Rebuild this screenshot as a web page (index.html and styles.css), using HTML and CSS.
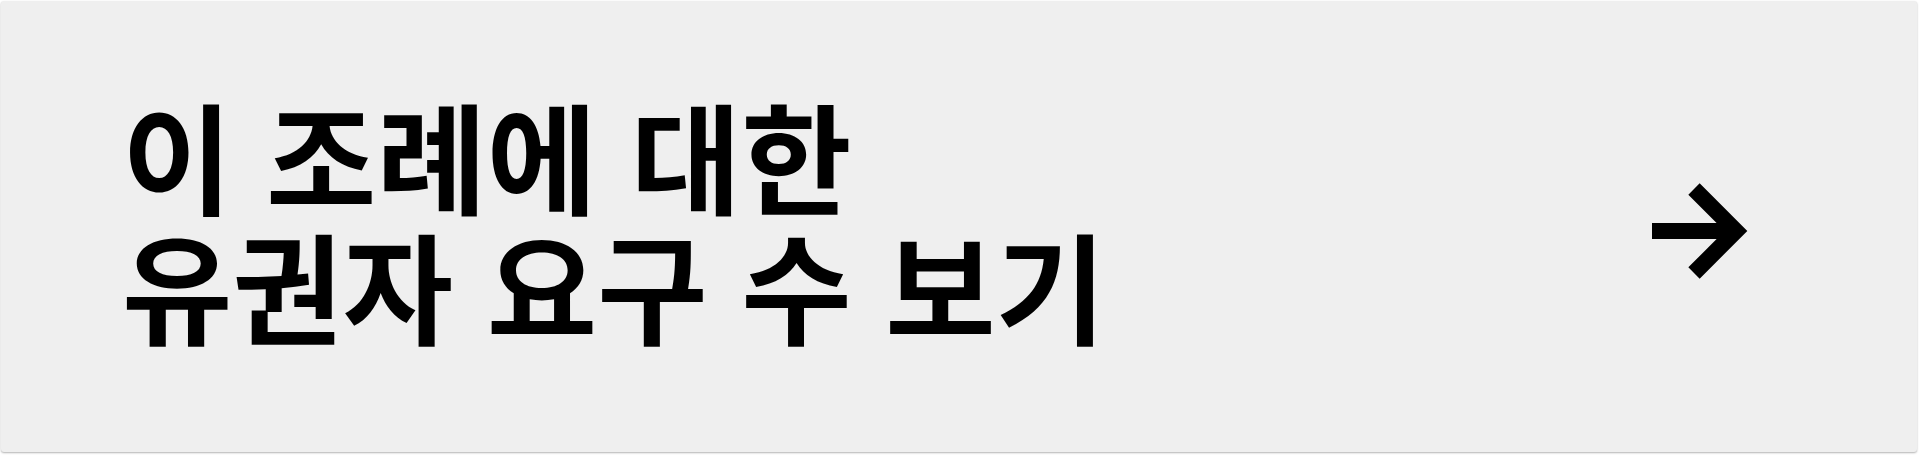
FILE: index.html
```html
<!DOCTYPE html>
<html lang="ko">

<head>
    <meta charset="UTF-8">
    <meta name="viewport" content="width=device-width, initial-scale=1.0">
    <title>조례 유권자 요구</title>
    <link rel="stylesheet" href="styles.css">
</head>

<body>
    <div class="outer">
        <a class="linkCard" href="#">
            <div class="cardTitle">
                <div class="line">이 조례에 대한</div>
                <div class="line">유권자 요구 수 보기</div>
            </div>
            <!-- 오른쪽 화살표 -->
            <svg class="arrow" viewBox="0 0 100 100" width="100" height="100">
                <path d="M4 50 H88 M46 8 L88 50 L46 92" fill="none" stroke="#000" stroke-width="16"
                    stroke-linejoin="miter" stroke-linecap="butt" />
            </svg>
        </a>
    </div>
</body>

</html>
```

FILE: styles.css
```css
html,
body {
    margin: 0;
    padding: 0;
    background-color: #fff;
}

.outer {
    padding: 1px 2px 3px 1px;
}

.outer>.linkCard {
    display: flex;
    justify-content: space-between;
    align-items: center;
    height: 451px;
    box-sizing: border-box;
    padding: 0 169px 0 121px;
    background-color: #efefef;
    border-radius: 3px;
    box-shadow: 0 1px 2px rgba(0, 0, 0, 0.3);
    color: #000;
    text-decoration: none;
}

.outer>.linkCard>.cardTitle {
    margin-bottom: 16px;
    font-family: "Noto Sans CJK KR", "Noto Sans", sans-serif;
    font-weight: 700;
    font-size: 120px;
    line-height: 130px;
}

.outer>.linkCard>.arrow {
    display: block;
    flex-shrink: 0;
    margin-top: 9px;
}
```
